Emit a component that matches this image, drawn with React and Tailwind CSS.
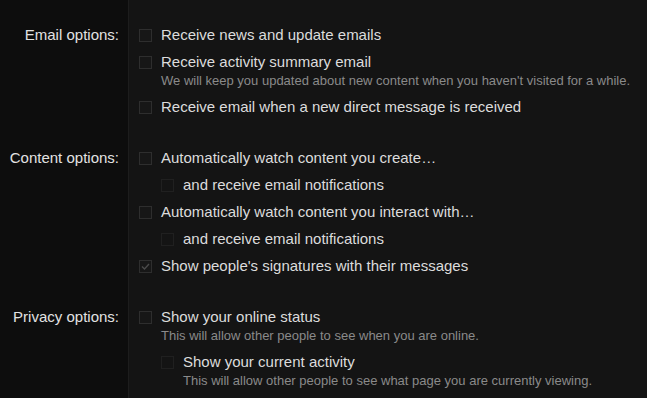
import React from "react";

function Box({ checked, disabled }) {
  return (
    <span
      className={
        "mt-[4px] flex h-[13px] w-[13px] shrink-0 items-center justify-center border " +
        (disabled ? "border-[#202020] bg-[#141414]" : "border-[#2e2e2e] bg-[#171717]")
      }
    >
      {checked && (
        <svg width="11" height="11" viewBox="0 0 11 11">
          <path d="M2 5.5 L4.5 8 L9 3" fill="none" stroke="#4a4a4a" strokeWidth="1.4" />
        </svg>
      )}
    </span>
  );
}

function Item({ label, hint, checked, disabled, sub }) {
  return (
    <div className={"flex gap-[9px] " + (sub ? "pl-[22px]" : "")}>
      <Box checked={checked} disabled={disabled} />
      <div className="flex flex-col">
        <span className="text-[15px] leading-[20px] text-[#dcdcdc]">{label}</span>
        {hint && (
          <span className="mb-[1px] text-[13px] leading-[17px] text-[#8a8a8a]">{hint}</span>
        )}
      </div>
    </div>
  );
}

function Group({ label, children, last }) {
  return (
    <div className="flex">
      <div className="w-[128px] shrink-0 pr-[9px] pt-[25px] text-right text-[15px] leading-[20px] text-[#e2e2e2]">
        {label}
      </div>
      <div className={"flex flex-1 flex-col gap-[7px] pl-[11px] pt-[25px] " + (last ? "pb-[20px]" : "pb-[6px]")}>
        {children}
      </div>
    </div>
  );
}

export default function App() {
  return (
    <div
      className="min-h-[398px] bg-[#141414]"
      style={{ fontFamily: "'Liberation Sans', Arial, sans-serif" }}
    >
      <div className="flex min-h-[398px] flex-col bg-[linear-gradient(to_right,#0d0d0d_128px,#1d1d1d_128px,#1d1d1d_129px,#141414_129px)]">
        <Group label="Email options:">
          <Item label="Receive news and update emails" />
          <Item
            label="Receive activity summary email"
            hint="We will keep you updated about new content when you haven't visited for a while."
          />
          <Item label="Receive email when a new direct message is received" />
        </Group>
        <Group label="Content options:">
          <Item label="Automatically watch content you create…" />
          <Item label="and receive email notifications" sub disabled />
          <Item label="Automatically watch content you interact with…" />
          <Item label="and receive email notifications" sub disabled />
          <Item label="Show people's signatures with their messages" checked />
        </Group>
        <Group label="Privacy options:" last>
          <Item
            label="Show your online status"
            hint="This will allow other people to see when you are online."
          />
          <Item
            label="Show your current activity"
            hint="This will allow other people to see what page you are currently viewing."
            sub
            disabled
          />
        </Group>
      </div>
    </div>
  );
}
